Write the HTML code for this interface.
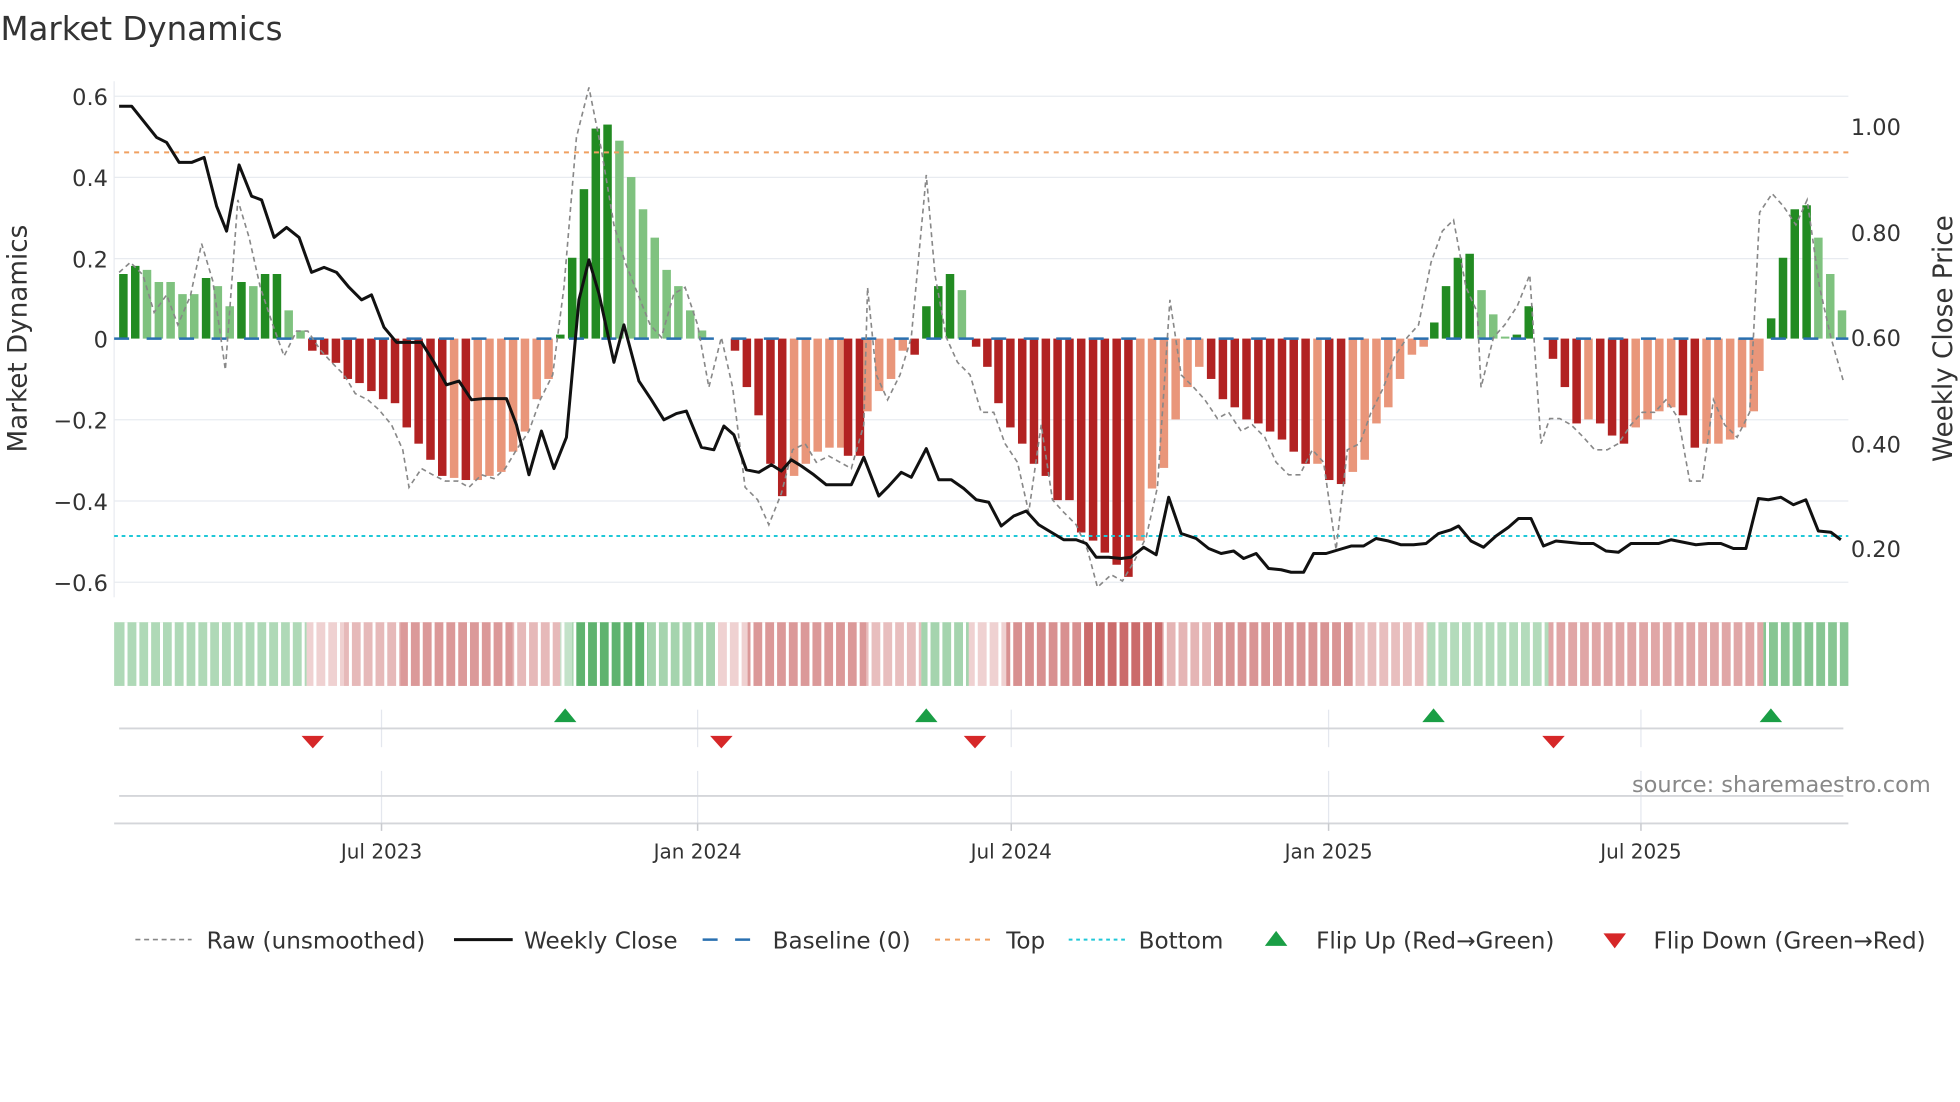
<!DOCTYPE html>
<html><head><meta charset="utf-8"><style>
html,body{margin:0;padding:0;background:#fff;}
svg{display:block;font-family:"DejaVu Sans","Liberation Sans",sans-serif;}
.D{fill:#228b22}.L{fill:#7fc27f}.R{fill:#b22222}.S{fill:#e9967a}
.hg{fill:rgb(55,160,75)}.hr{fill:rgb(190,70,70)}
</style></head><body>
<svg width="1960" height="1102" viewBox="0 0 1568 882" xmlns="http://www.w3.org/2000/svg">
<rect width="1568" height="882" fill="#fff"/>
<text x="0" y="32" font-size="26" fill="#333">Market Dynamics</text>
<g stroke="#e8ebf0" stroke-width="1">
<line x1="91" x2="1479" y1="77" y2="77"/><line x1="91" x2="1479" y1="142" y2="142"/>
<line x1="91" x2="1479" y1="207" y2="207"/><line x1="91" x2="1479" y1="336" y2="336"/>
<line x1="91" x2="1479" y1="401" y2="401"/><line x1="91" x2="1479" y1="466" y2="466"/>
<line x1="91" x2="91" y1="65" y2="478"/>
</g>
<g font-size="18" fill="#333" text-anchor="end">
<text x="86" y="84">0.6</text><text x="86" y="149">0.4</text><text x="86" y="214">0.2</text>
<text x="86" y="278">0</text><text x="86" y="343">−0.2</text><text x="86" y="408">−0.4</text><text x="86" y="473">−0.6</text>
</g>
<g font-size="18" fill="#333">
<text x="1481" y="108">1.00</text><text x="1481" y="193">0.80</text><text x="1481" y="277">0.60</text>
<text x="1481" y="362">0.40</text><text x="1481" y="446">0.20</text>
</g>
<text transform="translate(21,271) rotate(-90)" font-size="21" fill="#333" text-anchor="middle">Market Dynamics</text>
<text transform="translate(1562,271) rotate(-90)" font-size="21" fill="#333" text-anchor="middle">Weekly Close Price</text>
<g>
<rect class="D" x="95.0" y="219.3" width="6.8" height="51.7"/>
<rect class="D" x="104.5" y="212.8" width="6.8" height="58.2"/>
<rect class="L" x="113.9" y="216" width="6.8" height="55"/>
<rect class="L" x="123.4" y="225.7" width="6.8" height="45.3"/>
<rect class="L" x="132.8" y="225.7" width="6.8" height="45.3"/>
<rect class="L" x="142.3" y="235.4" width="6.8" height="35.6"/>
<rect class="L" x="151.7" y="235.4" width="6.8" height="35.6"/>
<rect class="D" x="161.2" y="222.5" width="6.8" height="48.5"/>
<rect class="L" x="170.6" y="229" width="6.8" height="42"/>
<rect class="L" x="180.1" y="245.1" width="6.8" height="25.9"/>
<rect class="D" x="189.5" y="225.7" width="6.8" height="45.3"/>
<rect class="L" x="199.0" y="229" width="6.8" height="42"/>
<rect class="D" x="208.4" y="219.3" width="6.8" height="51.7"/>
<rect class="D" x="217.9" y="219.3" width="6.8" height="51.7"/>
<rect class="L" x="227.3" y="248.4" width="6.8" height="22.6"/>
<rect class="L" x="236.8" y="264.5" width="6.8" height="6.5"/>
<rect class="R" x="246.2" y="271" width="6.8" height="9.7"/>
<rect class="R" x="255.7" y="271" width="6.8" height="12.9"/>
<rect class="R" x="265.1" y="271" width="6.8" height="19.4"/>
<rect class="R" x="274.6" y="271" width="6.8" height="32.3"/>
<rect class="R" x="284.0" y="271" width="6.8" height="35.6"/>
<rect class="R" x="293.5" y="271" width="6.8" height="42"/>
<rect class="R" x="302.9" y="271" width="6.8" height="48.5"/>
<rect class="R" x="312.4" y="271" width="6.8" height="51.7"/>
<rect class="R" x="321.8" y="271" width="6.8" height="71.1"/>
<rect class="R" x="331.3" y="271" width="6.8" height="84.1"/>
<rect class="R" x="340.8" y="271" width="6.8" height="97"/>
<rect class="R" x="350.2" y="271" width="6.8" height="109.9"/>
<rect class="S" x="359.7" y="271" width="6.8" height="111.5"/>
<rect class="R" x="369.1" y="271" width="6.8" height="113.2"/>
<rect class="S" x="378.6" y="271" width="6.8" height="113.2"/>
<rect class="S" x="388.0" y="271" width="6.8" height="109.9"/>
<rect class="S" x="397.5" y="271" width="6.8" height="106.7"/>
<rect class="S" x="406.9" y="271" width="6.8" height="90.5"/>
<rect class="S" x="416.4" y="271" width="6.8" height="74.4"/>
<rect class="S" x="425.8" y="271" width="6.8" height="48.5"/>
<rect class="S" x="435.3" y="271" width="6.8" height="32.3"/>
<rect class="D" x="444.7" y="267.8" width="6.8" height="3.2"/>
<rect class="D" x="454.2" y="206.3" width="6.8" height="64.7"/>
<rect class="D" x="463.6" y="151.4" width="6.8" height="119.6"/>
<rect class="D" x="473.1" y="102.9" width="6.8" height="168.1"/>
<rect class="D" x="482.5" y="99.7" width="6.8" height="171.3"/>
<rect class="L" x="492.0" y="112.6" width="6.8" height="158.4"/>
<rect class="L" x="501.4" y="141.7" width="6.8" height="129.3"/>
<rect class="L" x="510.9" y="167.5" width="6.8" height="103.5"/>
<rect class="L" x="520.3" y="190.2" width="6.8" height="80.8"/>
<rect class="L" x="529.8" y="216" width="6.8" height="55"/>
<rect class="L" x="539.2" y="229" width="6.8" height="42"/>
<rect class="L" x="548.7" y="248.4" width="6.8" height="22.6"/>
<rect class="L" x="558.1" y="264.5" width="6.8" height="6.5"/>
<rect class="R" x="584.5" y="271" width="6.8" height="9.7"/>
<rect class="R" x="594.0" y="271" width="6.8" height="38.8"/>
<rect class="R" x="603.4" y="271" width="6.8" height="61.4"/>
<rect class="R" x="612.9" y="271" width="6.8" height="100.2"/>
<rect class="R" x="622.3" y="271" width="6.8" height="126.1"/>
<rect class="S" x="631.8" y="271" width="6.8" height="109.9"/>
<rect class="S" x="641.2" y="271" width="6.8" height="100.2"/>
<rect class="S" x="650.7" y="271" width="6.8" height="90.5"/>
<rect class="S" x="660.1" y="271" width="6.8" height="87.3"/>
<rect class="S" x="669.6" y="271" width="6.8" height="87.3"/>
<rect class="R" x="675.0" y="271" width="6.8" height="93.8"/>
<rect class="R" x="684.5" y="271" width="6.8" height="93.8"/>
<rect class="S" x="690.5" y="271" width="6.8" height="58.2"/>
<rect class="S" x="699.9" y="271" width="6.8" height="42"/>
<rect class="S" x="709.4" y="271" width="6.8" height="32.3"/>
<rect class="S" x="718.8" y="271" width="6.8" height="9.7"/>
<rect class="R" x="728.3" y="271" width="6.8" height="12.9"/>
<rect class="D" x="737.7" y="245.1" width="6.8" height="25.9"/>
<rect class="D" x="747.2" y="229" width="6.8" height="42"/>
<rect class="D" x="756.6" y="219.3" width="6.8" height="51.7"/>
<rect class="L" x="766.1" y="232.2" width="6.8" height="38.8"/>
<rect class="R" x="777.5" y="271" width="6.8" height="6.5"/>
<rect class="R" x="786.5" y="271" width="6.8" height="22.6"/>
<rect class="R" x="795.4" y="271" width="6.8" height="51.7"/>
<rect class="R" x="804.9" y="271" width="6.8" height="71.1"/>
<rect class="R" x="814.4" y="271" width="6.8" height="84.1"/>
<rect class="R" x="823.8" y="271" width="6.8" height="100.2"/>
<rect class="R" x="833.3" y="271" width="6.8" height="109.9"/>
<rect class="R" x="842.7" y="271" width="6.8" height="129.3"/>
<rect class="R" x="852.2" y="271" width="6.8" height="129.3"/>
<rect class="R" x="861.6" y="271" width="6.8" height="155.2"/>
<rect class="R" x="871.1" y="271" width="6.8" height="161.7"/>
<rect class="R" x="880.5" y="271" width="6.8" height="171.3"/>
<rect class="R" x="890.0" y="271" width="6.8" height="181"/>
<rect class="R" x="899.4" y="271" width="6.8" height="190.7"/>
<rect class="S" x="908.9" y="271" width="6.8" height="161.7"/>
<rect class="S" x="918.3" y="271" width="6.8" height="120"/>
<rect class="S" x="927.8" y="271" width="6.8" height="103.5"/>
<rect class="S" x="937.2" y="271" width="6.8" height="64.7"/>
<rect class="S" x="946.7" y="271" width="6.8" height="38.8"/>
<rect class="S" x="956.1" y="271" width="6.8" height="22.6"/>
<rect class="R" x="965.6" y="271" width="6.8" height="32.3"/>
<rect class="R" x="975.0" y="271" width="6.8" height="48.5"/>
<rect class="R" x="984.5" y="271" width="6.8" height="55"/>
<rect class="R" x="993.9" y="271" width="6.8" height="64.7"/>
<rect class="R" x="1003.4" y="271" width="6.8" height="67.9"/>
<rect class="R" x="1012.8" y="271" width="6.8" height="74.4"/>
<rect class="R" x="1022.3" y="271" width="6.8" height="80.8"/>
<rect class="R" x="1031.7" y="271" width="6.8" height="90.5"/>
<rect class="R" x="1041.2" y="271" width="6.8" height="100.2"/>
<rect class="S" x="1050.7" y="271" width="6.8" height="100.2"/>
<rect class="R" x="1060.1" y="271" width="6.8" height="113.2"/>
<rect class="R" x="1069.6" y="271" width="6.8" height="116.4"/>
<rect class="S" x="1079.0" y="271" width="6.8" height="106.7"/>
<rect class="S" x="1088.5" y="271" width="6.8" height="97"/>
<rect class="S" x="1097.9" y="271" width="6.8" height="67.9"/>
<rect class="S" x="1107.4" y="271" width="6.8" height="55"/>
<rect class="S" x="1116.8" y="271" width="6.8" height="32.3"/>
<rect class="S" x="1126.3" y="271" width="6.8" height="12.9"/>
<rect class="S" x="1135.7" y="271" width="6.8" height="6.5"/>
<rect class="D" x="1144.2" y="258.1" width="6.8" height="12.9"/>
<rect class="D" x="1153.6" y="229" width="6.8" height="42"/>
<rect class="D" x="1163.1" y="206.3" width="6.8" height="64.7"/>
<rect class="D" x="1172.5" y="203.1" width="6.8" height="67.9"/>
<rect class="L" x="1182.0" y="232.2" width="6.8" height="38.8"/>
<rect class="L" x="1191.4" y="251.6" width="6.8" height="19.4"/>
<rect class="L" x="1200.9" y="269.4" width="6.8" height="1.6"/>
<rect class="D" x="1210.3" y="267.8" width="6.8" height="3.2"/>
<rect class="D" x="1219.8" y="245.1" width="6.8" height="25.9"/>
<rect class="R" x="1239.2" y="271" width="6.8" height="16.2"/>
<rect class="R" x="1248.7" y="271" width="6.8" height="38.8"/>
<rect class="R" x="1258.1" y="271" width="6.8" height="67.9"/>
<rect class="S" x="1267.6" y="271" width="6.8" height="64.7"/>
<rect class="R" x="1277.0" y="271" width="6.8" height="67.9"/>
<rect class="R" x="1286.5" y="271" width="6.8" height="77.6"/>
<rect class="R" x="1296.0" y="271" width="6.8" height="84.1"/>
<rect class="S" x="1305.4" y="271" width="6.8" height="71.1"/>
<rect class="S" x="1314.9" y="271" width="6.8" height="64.7"/>
<rect class="S" x="1324.3" y="271" width="6.8" height="58.2"/>
<rect class="S" x="1333.8" y="271" width="6.8" height="55"/>
<rect class="R" x="1343.2" y="271" width="6.8" height="61.4"/>
<rect class="R" x="1352.7" y="271" width="6.8" height="87.3"/>
<rect class="S" x="1362.1" y="271" width="6.8" height="84.1"/>
<rect class="S" x="1371.6" y="271" width="6.8" height="84.1"/>
<rect class="S" x="1381.0" y="271" width="6.8" height="80.8"/>
<rect class="S" x="1390.5" y="271" width="6.8" height="71.1"/>
<rect class="S" x="1399.9" y="271" width="6.8" height="58.2"/>
<rect class="S" x="1404.4" y="271" width="6.8" height="25.9"/>
<rect class="D" x="1413.8" y="254.8" width="6.8" height="16.2"/>
<rect class="D" x="1423.3" y="206.3" width="6.8" height="64.7"/>
<rect class="D" x="1432.7" y="167.5" width="6.8" height="103.5"/>
<rect class="D" x="1442.2" y="164.3" width="6.8" height="106.7"/>
<rect class="L" x="1451.6" y="190.2" width="6.8" height="80.8"/>
<rect class="L" x="1461.1" y="219.3" width="6.8" height="51.7"/>
<rect class="L" x="1470.5" y="248.4" width="6.8" height="22.6"/>
</g>
<line x1="91" x2="1479" y1="122" y2="122" stroke="#f0a060" stroke-width="1.6" stroke-dasharray="4,4"/>
<line x1="91" x2="1479" y1="429" y2="429" stroke="#20c8d8" stroke-width="1.6" stroke-dasharray="3,3"/>
<line x1="91" x2="1479" y1="271" y2="271" stroke="#2a70b0" stroke-width="2" stroke-dasharray="12,14"/>
<polyline fill="none" stroke="#888" stroke-width="1.3" stroke-dasharray="4,3" points="95,218 104,210 114,220 123,250 133,236 142,260 152,237 161,195 170,225 180,296 190,160 199,190 208,230 218,260 227,285 237,265 246,265 256,280 265,290 275,300 284,315 294,320 303,328 313,340 322,360 327,390 337,375 346,380 356,385 366,385 375,390 385,380 395,383 404,375 413,360 423,345 432,320 442,300 451,230 461,110 471,70 481,120 491,180 500,210 510,235 520,260 529,270 539,235 548,230 558,260 567,310 577,270 586,310 596,390 606,400 615,420 625,395 634,360 644,355 653,370 663,365 672,370 681,375 691,340 694,230 701,300 710,320 720,300 729,270 741,140 748,220 757,270 766,290 776,300 785,330 795,330 804,355 814,370 823,410 833,340 842,400 851,410 861,420 870,440 878,470 889,460 898,465 907,450 917,430 926,390 936,240 945,300 955,310 964,320 974,335 983,330 993,345 1002,340 1012,350 1021,370 1031,380 1040,380 1050,360 1059,370 1069,440 1078,360 1088,355 1097,330 1107,310 1116,285 1126,270 1135,260 1145,210 1154,185 1163,176 1173,230 1182,250 1185,310 1195,270 1204,260 1214,245 1224,220 1233,355 1240,335 1248,335 1257,340 1267,350 1276,360 1286,360 1295,355 1305,340 1314,330 1324,330 1333,320 1343,335 1352,385 1362,385 1371,320 1380,340 1390,350 1400,330 1408,170 1418,155 1427,165 1437,180 1446,160 1456,230 1465,270 1475,305"/>
<polyline fill="none" stroke="#111" stroke-width="2.4" stroke-linejoin="round" points="95,85 105,85 125,110 133,114 143,130 153,130 163,126 173,165 181,185 191,132 201,157 209,160 219,190 229,182 239,190 249,218 259,214 269,218 279,230 289,240 297,236 307,262 317,274 327,274 337,274 347,290 357,308 367,305 377,320 387,319 397,319 405,319 413,340 423,380 433,345 443,375 453,350 463,240 471,208 479,235 491,290 499,260 511,305 521,320 531,336 541,331 549,329 561,358 571,360 579,341 587,348 597,376 607,378 617,372 625,377 633,368 641,373 651,380 661,388 669,388 681,388 691,366 703,397 711,389 721,378 729,382 741,359 751,384 761,384 771,391 781,400 791,402 801,421 811,413 821,409 831,420 841,426 851,432 861,432 869,435 877,446 887,446 897,447 905,446 915,438 925,444 935,398 945,427 957,431 967,439 977,443 987,441 995,447 1005,443 1015,455 1025,456 1033,458 1043,458 1051,443 1061,443 1071,440 1081,437 1091,437 1101,431 1111,433 1121,436 1131,436 1141,435 1151,427 1161,424 1167,421 1177,433 1187,438 1197,429 1207,422 1215,415 1225,415 1235,437 1245,433 1255,434 1265,435 1275,435 1285,441 1295,442 1305,435 1315,435 1327,435 1337,432 1347,434 1357,436 1367,435 1377,435 1387,439 1397,439 1407,399 1415,400 1425,398 1435,404 1445,400 1455,425 1465,426 1473,432"/>
<!-- heat strip -->
<g>
<rect class="hg" x="91" y="498" width="154" height="51" fill-opacity="0.4"/>
<rect class="hr" x="245" y="498" width="30" height="51" fill-opacity="0.25"/>
<rect class="hr" x="275" y="498" width="45" height="51" fill-opacity="0.38"/>
<rect class="hr" x="320" y="498" width="90" height="51" fill-opacity="0.55"/>
<rect class="hr" x="410" y="498" width="38" height="51" fill-opacity="0.38"/>
<rect class="hg" x="448" y="498" width="10" height="51" fill-opacity="0.3"/>
<rect class="hg" x="458" y="498" width="60" height="51" fill-opacity="0.8"/>
<rect class="hg" x="518" y="498" width="55" height="51" fill-opacity="0.45"/>
<rect class="hr" x="573" y="498" width="25" height="51" fill-opacity="0.25"/>
<rect class="hr" x="598" y="498" width="95" height="51" fill-opacity="0.55"/>
<rect class="hr" x="693" y="498" width="44" height="51" fill-opacity="0.35"/>
<rect class="hg" x="737" y="498" width="38" height="51" fill-opacity="0.45"/>
<rect class="hr" x="775" y="498" width="30" height="51" fill-opacity="0.25"/>
<rect class="hr" x="805" y="498" width="60" height="51" fill-opacity="0.6"/>
<rect class="hr" x="865" y="498" width="65" height="51" fill-opacity="0.8"/>
<rect class="hr" x="930" y="498" width="40" height="51" fill-opacity="0.4"/>
<rect class="hr" x="970" y="498" width="115" height="51" fill-opacity="0.58"/>
<rect class="hr" x="1085" y="498" width="57" height="51" fill-opacity="0.35"/>
<rect class="hg" x="1142" y="498" width="97" height="51" fill-opacity="0.38"/>
<rect class="hr" x="1239" y="498" width="172" height="51" fill-opacity="0.48"/>
<rect class="hg" x="1411" y="498" width="68" height="51" fill-opacity="0.6"/>
</g>
<g stroke="#fff" stroke-width="2.4">
<path d="M100.5 498v51M110 498v51M119.4 498v51M128.9 498v51M138.3 498v51M147.8 498v51M157.2 498v51M166.7 498v51M176.1 498v51M185.6 498v51M195 498v51M204.5 498v51M213.9 498v51M223.4 498v51M232.8 498v51M242.3 498v51M251.7 498v51M261.2 498v51M270.6 498v51M280.1 498v51M289.5 498v51M299 498v51M308.4 498v51M317.9 498v51M327.3 498v51M336.8 498v51M346.3 498v51M355.7 498v51M365.2 498v51M374.6 498v51M384.1 498v51M393.5 498v51M403 498v51M412.4 498v51M421.9 498v51M431.3 498v51M440.8 498v51M450.2 498v51M459.7 498v51M469.1 498v51M478.6 498v51M488 498v51M497.5 498v51M506.9 498v51M516.4 498v51M525.8 498v51M535.3 498v51M544.7 498v51M554.2 498v51M563.6 498v51M573.1 498v51M582.6 498v51M592 498v51M601.5 498v51M610.9 498v51M620.4 498v51M629.8 498v51M639.3 498v51M648.7 498v51M658.2 498v51M667.6 498v51M677.1 498v51M686.5 498v51M696 498v51M705.4 498v51M714.9 498v51M724.3 498v51M733.8 498v51M743.2 498v51M752.7 498v51M762.1 498v51M771.6 498v51M781 498v51M790.5 498v51M799.9 498v51M809.4 498v51M818.9 498v51M828.3 498v51M837.8 498v51M847.2 498v51M856.7 498v51M866.1 498v51M875.6 498v51M885 498v51M894.5 498v51M903.9 498v51M913.4 498v51M922.8 498v51M932.3 498v51M941.7 498v51M951.2 498v51M960.6 498v51M970.1 498v51M979.5 498v51M989 498v51M998.4 498v51M1007.9 498v51M1017.3 498v51M1026.8 498v51M1036.2 498v51M1045.7 498v51M1055.2 498v51M1064.6 498v51M1074.1 498v51M1083.5 498v51M1093 498v51M1102.4 498v51M1111.9 498v51M1121.3 498v51M1130.8 498v51M1140.2 498v51M1149.7 498v51M1159.1 498v51M1168.6 498v51M1178 498v51M1187.5 498v51M1196.9 498v51M1206.4 498v51M1215.8 498v51M1225.3 498v51M1234.7 498v51M1244.2 498v51M1253.6 498v51M1263.1 498v51M1272.5 498v51M1282 498v51M1291.5 498v51M1300.9 498v51M1310.4 498v51M1319.8 498v51M1329.3 498v51M1338.7 498v51M1348.2 498v51M1357.6 498v51M1367.1 498v51M1376.5 498v51M1386 498v51M1395.4 498v51M1404.9 498v51M1414.3 498v51M1423.8 498v51M1433.2 498v51M1442.7 498v51M1452.1 498v51M1461.6 498v51M1471 498v51"/>
</g>
<g stroke="#e4e7ee" stroke-width="1">
<line x1="305" x2="305" y1="568" y2="598"/><line x1="558" x2="558" y1="568" y2="598"/><line x1="809" x2="809" y1="568" y2="598"/><line x1="1063" x2="1063" y1="568" y2="598"/><line x1="1313" x2="1313" y1="568" y2="598"/>
<line x1="305" x2="305" y1="617" y2="659"/><line x1="558" x2="558" y1="617" y2="659"/><line x1="809" x2="809" y1="617" y2="659"/><line x1="1063" x2="1063" y1="617" y2="659"/><line x1="1313" x2="1313" y1="617" y2="659"/>
</g>
<line x1="95" x2="1475" y1="583" y2="583" stroke="#d4d6da" stroke-width="1.5"/>
<line x1="95" x2="1475" y1="637" y2="637" stroke="#d4d6da" stroke-width="1.5"/>
<line x1="91" x2="1479" y1="659" y2="659" stroke="#d4d6da" stroke-width="1.5"/>
<g stroke="#c8cace" stroke-width="1.2">
<line x1="305" x2="305" y1="659" y2="665"/><line x1="558" x2="558" y1="659" y2="665"/><line x1="809" x2="809" y1="659" y2="665"/><line x1="1063" x2="1063" y1="659" y2="665"/><line x1="1313" x2="1313" y1="659" y2="665"/>
</g>
<g fill="#1a9e45">
<polygon points="443,578 461,578 452,567"/><polygon points="732,578 750,578 741,567"/><polygon points="1138,578 1156,578 1147,567"/><polygon points="1408,578 1426,578 1417,567"/>
</g>
<g fill="#d62728">
<polygon points="241,589 259,589 250,599"/><polygon points="568,589 586,589 577,599"/><polygon points="771,589 789,589 780,599"/><polygon points="1234,589 1252,589 1243,599"/>
</g>
<text x="1545" y="634" font-size="18" fill="#888" text-anchor="end">source: sharemaestro.com</text>
<g font-size="16" fill="#333" text-anchor="middle">
<text x="305" y="687">Jul 2023</text><text x="558" y="687">Jan 2024</text><text x="809" y="687">Jul 2024</text><text x="1063" y="687">Jan 2025</text><text x="1313" y="687">Jul 2025</text>
</g>
<g font-size="18.5" fill="#333">
<line x1="108" x2="153" y1="752" y2="752" stroke="#888" stroke-width="1.3" stroke-dasharray="4,3"/>
<text x="165" y="759">Raw (unsmoothed)</text>
<line x1="363" x2="410" y1="752" y2="752" stroke="#111" stroke-width="2.4"/>
<text x="419" y="759">Weekly Close</text>
<line x1="562" x2="606" y1="752" y2="752" stroke="#2a70b0" stroke-width="2" stroke-dasharray="12,14"/>
<text x="618" y="759">Baseline (0)</text>
<line x1="748" x2="793" y1="752" y2="752" stroke="#f0a060" stroke-width="1.6" stroke-dasharray="4,4"/>
<text x="805" y="759">Top</text>
<line x1="855" x2="900" y1="752" y2="752" stroke="#20c8d8" stroke-width="1.6" stroke-dasharray="3,3"/>
<text x="911" y="759">Bottom</text>
<polygon points="1012,757 1030,757 1021,745" fill="#1a9e45"/>
<text x="1053" y="759">Flip Up (Red→Green)</text>
<polygon points="1283,747 1301,747 1292,759" fill="#d62728"/>
<text x="1323" y="759">Flip Down (Green→Red)</text>
</g>
</svg>
</body></html>
